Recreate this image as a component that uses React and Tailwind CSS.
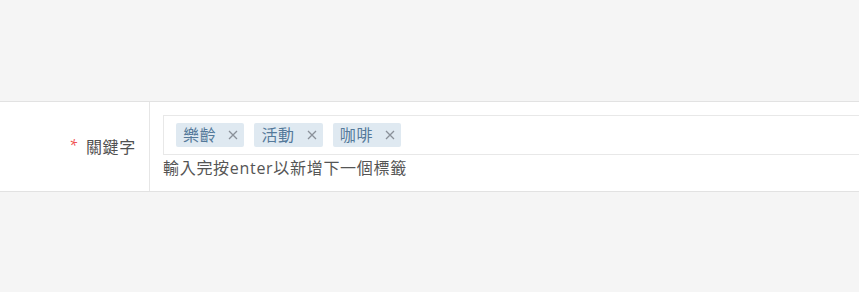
import React from "react";

function Tag({ label }) {
  return (
    <div className="flex items-center h-[24px] rounded-[2px] bg-[#dfe9f1] pl-[7px] pr-[6px]">
      <span className="text-[16px] leading-[20px] tracking-[0.7px] text-[#54799a]">{label}</span>
      <svg className="ml-[12px]" width="10" height="10" viewBox="0 0 10 10">
        <path d="M1 1 L9 9 M9 1 L1 9" stroke="#8a9099" strokeWidth="1.3" fill="none" />
      </svg>
    </div>
  );
}

export default function App() {
  return (
    <div
      className="w-[859px] h-[292px] bg-[#f5f5f5] overflow-hidden pt-[101px]"
      style={{ fontFamily: '"Open Sans", "Noto Sans CJK TC", sans-serif' }}
    >
      <div className="flex bg-white border-y border-[#e2e2e2] h-[91px]">
        <div className="w-[150px] shrink-0 border-r border-[#e6e6e6] flex items-center justify-end pr-[13px]">
          <span className="self-start mt-[36px] mr-[9px] text-[#f04a4a] text-[14px] leading-[14px] italic">*</span>
          <span className="text-[16px] leading-[20px] tracking-[0.7px] text-[#505050]">關鍵字</span>
        </div>
        <div className="flex-1 pl-[13px] pt-[13px]">
          <div className="w-[800px] h-[40px] border border-[#e8e8e8] flex items-center gap-[10px] pl-[12px]">
            <Tag label="樂齡" />
            <Tag label="活動" />
            <Tag label="咖啡" />
          </div>
          <div className="mt-[2px] text-[16px] leading-[22px] tracking-[0.7px] text-[#555555]">
            輸入完按enter以新增下一個標籤
          </div>
        </div>
      </div>
    </div>
  );
}
